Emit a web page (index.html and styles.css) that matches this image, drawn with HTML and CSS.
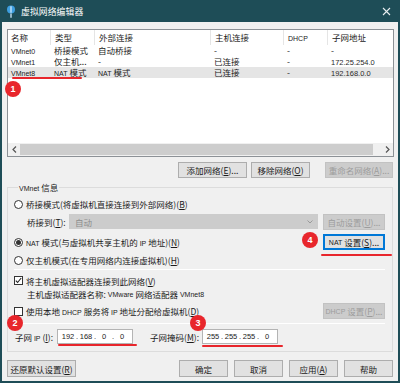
FILE: index.html
```html
<!DOCTYPE html>
<html lang="zh-CN">
<head>
    <meta charset="UTF-8">
    <meta name="viewport" content="width=device-width, initial-scale=1.0">
    <title>虚拟网络编辑器</title>
    <link rel="stylesheet" href="styles.css">
</head>
<body>
    <div class="window">
        <!-- Title bar -->
        <div class="titlebar">
            <svg class="app-icon" width="10" height="13" viewBox="0 0 10 13">
                <circle cx="5" cy="4.5" r="4" fill="#3e9fe0"/>
                <path d="M5 1.2v6.6M5 8.5v4.2" stroke="#cfeaff" stroke-width="1.3"/>
            </svg>
            <span class="title">虚拟网络编辑器</span>
            <svg class="close" width="9" height="9" viewBox="0 0 9 9">
                <path d="M1 1l7 7M8 1l-7 7" stroke="#e8eef0" stroke-width="1.1"/>
            </svg>
        </div>

        <div class="client">
            <!-- Network list -->
            <div class="list">
                <div class="list-row list-head">
                    <div class="cell">名称</div>
                    <div class="cell">类型</div>
                    <div class="cell">外部连接</div>
                    <div class="cell">主机连接</div>
                    <div class="cell"><span class="en">DHCP</span></div>
                    <div class="cell">子网地址</div>
                </div>
                <div class="list-row">
                    <div class="cell"><span class="en">VMnet0</span></div>
                    <div class="cell">桥接模式</div>
                    <div class="cell">自动桥接</div>
                    <div class="cell">-</div>
                    <div class="cell">-</div>
                    <div class="cell">-</div>
                </div>
                <div class="list-row">
                    <div class="cell"><span class="en">VMnet1</span></div>
                    <div class="cell">仅主机...</div>
                    <div class="cell">-</div>
                    <div class="cell">已连接</div>
                    <div class="cell">-</div>
                    <div class="cell"><span class="en ip">172.25.254.0</span></div>
                </div>
                <div class="list-row selected">
                    <div class="cell"><span class="en">VMnet8</span></div>
                    <div class="cell"><span class="en">NAT</span> 模式</div>
                    <div class="cell"><span class="en">NAT</span> 模式</div>
                    <div class="cell">已连接</div>
                    <div class="cell">-</div>
                    <div class="cell"><span class="en ip">192.168.0.0</span></div>
                </div>
                <div class="list-fill"></div>
                <div class="hscroll">
                    <span class="arrow">
                        <svg width="5" height="7" viewBox="0 0 5 7"><path d="M4 0.5L1 3.5l3 3" fill="none" stroke="#555" stroke-width="1.2"/></svg>
                    </span>
                    <div class="thumb"></div>
                    <span class="arrow">
                        <svg width="5" height="7" viewBox="0 0 5 7"><path d="M1 0.5l3 3-3 3" fill="none" stroke="#555" stroke-width="1.2"/></svg>
                    </span>
                </div>
            </div>

            <div class="net-actions">
                <button class="btn btn-add">添加网络(<u>E</u>)...</button>
                <button class="btn btn-remove">移除网络(<u>O</u>)</button>
                <button class="btn btn-rename" disabled>重命名网络(<u>A</u>)...</button>
            </div>

            <!-- VMnet info group -->
            <div class="group">
                <div class="group-title"><span class="en">VMnet</span> 信息</div>

                <div class="opt opt-bridge">
                    <span class="radio"></span>
                    <span>桥接模式(将虚拟机直接连接到外部网络)(<u>B</u>)</span>
                </div>
                <div class="opt bridge-to">
                    <span class="bridge-label">桥接到(<u>T</u>):</span>
                    <div class="select">
                        <span>自动</span>
                        <svg width="6" height="4" viewBox="0 0 6 4"><path d="M0.5 0.5L3 3l2.5-2.5" fill="none" stroke="#9a9a9a"/></svg>
                    </div>
                    <button class="btn btn-side" disabled>自动设置(<u>U</u>)...</button>
                </div>
                <div class="opt opt-nat">
                    <span class="radio checked"></span>
                    <span><span class="en">NAT</span> 模式(与虚拟机共享主机的 <span class="en">IP</span> 地址)(<u>N</u>)</span>
                    <button class="btn btn-side btn-focus"><span class="en">NAT</span>&nbsp;设置(<u>S</u>)...</button>
                </div>
                <div class="opt opt-host">
                    <span class="radio"></span>
                    <span>仅主机模式(在专用网络内连接虚拟机)(<u>H</u>)</span>
                </div>

                <div class="sep sep-top"></div>

                <div class="opt opt-check1">
                    <span class="check checked">
                        <svg width="7" height="7" viewBox="0 0 7 7"><path d="M0.8 3.6l1.8 1.9L6.2 1" fill="none" stroke="#222" stroke-width="1.1"/></svg>
                    </span>
                    <span>将主机虚拟适配器连接到此网络(<u>V</u>)</span>
                </div>
                <div class="opt adapter-name">
                    主机虚拟适配器名称: <span class="en">&nbsp;VMware&nbsp;</span> 网络适配器 <span class="en">&nbsp;VMnet8</span>
                </div>
                <div class="opt opt-check2">
                    <span class="check"></span>
                    <span>使用本地 <span class="en">DHCP</span> 服务将 <span class="en">IP</span> 地址分配给虚拟机(<u>D</u>)</span>
                    <button class="btn btn-side" disabled><span class="en">DHCP</span>&nbsp;设置(<u>P</u>)...</button>
                </div>

                <div class="sep sep-bottom"></div>

                <div class="opt addr-row">
                    <span class="addr-label">子网 <span class="en">IP</span> (<u>I</u>):</span>
                    <div class="ip-box">
                        <span class="oct">192</span><span class="dot">.</span><span class="oct">168</span><span class="dot">.</span><span class="oct">0</span><span class="dot">.</span><span class="oct">0</span>
                    </div>
                    <span class="addr-label mask-label">子网掩码(<u>M</u>):</span>
                    <div class="ip-box">
                        <span class="oct">255</span><span class="dot">.</span><span class="oct">255</span><span class="dot">.</span><span class="oct">255</span><span class="dot">.</span><span class="oct">0</span>
                    </div>
                </div>
            </div>

            <div class="footer">
                <button class="btn btn-reset">还原默认设置(<u>R</u>)</button>
                <div class="footer-right">
                    <button class="btn btn-foot">确定</button>
                    <button class="btn btn-foot">取消</button>
                    <button class="btn btn-foot">应用(<u>A</u>)</button>
                    <button class="btn btn-foot">帮助</button>
                </div>
            </div>
        </div>

        <!-- Annotations -->
        <span class="mark mark-1"></span>
        <span class="mark mark-2"></span>
        <span class="mark mark-3"></span>
        <span class="mark mark-4"></span>
        <span class="badge badge-1">1</span>
        <span class="badge badge-2">2</span>
        <span class="badge badge-3">3</span>
        <span class="badge badge-4">4</span>
    </div>
</body>
</html>
```

FILE: styles.css
```css
* {
    box-sizing: border-box;
}
body {
    margin: 0;
    font-family: "Noto Sans CJK SC", sans-serif;
    font-size: 8.5px;
    color: #1b1b1b;
    background: #f0f0f0;
}
.en {
    font-family: "Liberation Sans", Arial, sans-serif;
    font-size: 7px;
}
.ip {
    font-size: 7.5px;
    color: #2a2a2a;
}
u {
    text-underline-offset: 1px;
}
.window {
    position: relative;
    width: 400px;
    height: 383px;
    display: flex;
    flex-direction: column;
}
.titlebar {
    height: 22px;
    background: #1e4d57;
    display: flex;
    align-items: center;
    padding: 0 9px 0 6px;
    color: #fff;
}
.app-icon {
    margin-top: 1px;
}
.title {
    margin-left: 5px;
    font-size: 8.8px;
    letter-spacing: 0.1px;
}
.close {
    margin-left: auto;
}
.client {
    flex: 1;
    display: flex;
    flex-direction: column;
    border: 2px solid #1e4d57;
    border-top: 0;
    padding: 7px 4px 0 5px;
}

/* list view */
.list {
    height: 128px;
    background: #fff;
    border: 1px solid #8c9196;
    display: flex;
    flex-direction: column;
}
.list-row {
    display: grid;
    grid-template-columns: 42px 44px 116px 73px 44px 1fr;
    height: 11px;
    line-height: 11px;
    white-space: nowrap;
}
.list-row .cell {
    padding-left: 4px;
    overflow: hidden;
}
.list-row .cell:first-child {
    padding-left: 3px;
}
.list-head {
    height: 15px;
    line-height: 15px;
    color: #222;
}
.list-head .cell + .cell {
    border-left: 1px solid #e5e5e5;
}
.list-head .cell {
    padding-left: 4px;
}
.selected {
    background: #e5e5e5;
}
.list-fill {
    flex: 1;
}
.hscroll {
    height: 13px;
    display: flex;
    align-items: center;
    background: #f0f0f0;
}
.arrow {
    width: 12px;
    display: flex;
    justify-content: center;
}
.thumb {
    flex: 1;
    height: 11px;
    background: #cdcdcd;
    margin-right: 8px;
}

/* buttons */
.btn {
    font-family: inherit;
    font-size: 8.5px;
    color: #1b1b1b;
    height: 16px;
    padding: 0;
    border: 1px solid #adadad;
    background: #e1e1e1;
    display: flex;
    align-items: center;
    justify-content: center;
    white-space: nowrap;
}
.btn:disabled {
    background: #cccccc;
    border-color: #c2c2c2;
    color: #9c9c9c;
}
.btn-focus {
    border-color: #0078d7;
    box-shadow: inset 0 0 0 1px #0078d7;
}
.net-actions {
    display: flex;
    justify-content: flex-end;
    margin-top: 5px;
    padding-right: 1px;
}
.btn-add {
    width: 69px;
}
.btn-remove {
    width: 59px;
    margin-left: 4px;
}
.btn-rename {
    width: 68px;
    margin-left: 15px;
}

/* group box */
.group {
    margin: 9px 1px 0 0;
    border: 1px solid #dcdcdc;
    padding: 0 7px 2px 6px;
}
.group-title {
    margin: -7px 0 0 4px;
    width: fit-content;
    padding: 0 1px;
    line-height: 12px;
    background: #f0f0f0;
}
.opt {
    display: flex;
    align-items: center;
    white-space: nowrap;
}
.opt-bridge {
    height: 18px;
}
.bridge-to {
    height: 17px;
    padding-left: 13px;
}
.opt-nat {
    height: 24px;
}
.opt-host {
    height: 12px;
}
.opt-check1 {
    height: 17px;
}
.adapter-name {
    height: 10px;
    padding-left: 13px;
}
.opt-check2 {
    height: 24px;
}
.addr-row {
    height: 25px;
    padding-left: 1px;
}
.radio {
    width: 9px;
    height: 9px;
    border: 1px solid #333;
    border-radius: 50%;
    background: #fff;
    margin-right: 3px;
    flex: none;
    display: flex;
    align-items: center;
    justify-content: center;
}
.radio.checked::after {
    content: "";
    width: 5px;
    height: 5px;
    border-radius: 50%;
    background: #333;
}
.check {
    width: 9px;
    height: 9px;
    border: 1px solid #333;
    background: #fff;
    margin-right: 3px;
    flex: none;
    display: flex;
    align-items: center;
    justify-content: center;
}
.bridge-label {
    width: 42px;
}
.select {
    width: 249px;
    height: 15px;
    background: #cccccc;
    color: #8d8d8d;
    display: flex;
    align-items: center;
    justify-content: space-between;
    padding: 0 5px 0 6px;
}
.btn-side {
    width: 62px;
    margin-left: auto;
}
.sep {
    height: 1px;
    background: #d9d9d9;
    border-bottom: 1px solid #fff;
}
.sep-top {
    margin: 3px 0 2px;
}
.sep-bottom {
    margin: 0;
}
.addr-label {
    width: 42px;
}
.mask-label {
    width: 52px;
    margin-left: 17px;
}
.ip-box {
    width: 76px;
    height: 15px;
    background: #fff;
    border: 1px solid #b4b4b4;
    display: flex;
    align-items: center;
    padding-left: 3px;
    font-family: "Liberation Sans", Arial, sans-serif;
    font-size: 7.5px;
    color: #222;
}
.oct {
    width: 14px;
    text-align: center;
}
.dot {
    width: 4px;
    text-align: center;
}

/* footer */
.footer {
    display: flex;
    margin-top: 8px;
}
.btn-reset {
    width: 69px;
    height: 17px;
}
.footer-right {
    display: flex;
    gap: 6px;
    margin-left: auto;
    padding-right: 1px;
}
.btn-foot {
    width: 49px;
    height: 17px;
}

/* red annotations */
.badge {
    position: absolute;
    width: 16px;
    height: 16px;
    border-radius: 50%;
    background: #e8262c;
    color: #fff;
    font-family: "Liberation Sans", Arial, sans-serif;
    font-weight: bold;
    font-size: 9px;
    line-height: 16px;
    text-align: center;
}
.badge-1 { left: 5px; top: 81px; }
.badge-2 { left: 7px; top: 315px; }
.badge-3 { left: 190px; top: 315px; }
.badge-4 { left: 302px; top: 232px; }
.mark {
    position: absolute;
    height: 1.5px;
    background: #e8262c;
    border-radius: 1px;
}
.mark-1 { left: 12px; width: 70px; top: 77px; }
.mark-2 { left: 58px; width: 79px; top: 344px; }
.mark-3 { left: 202px; width: 81px; top: 345px; }
.mark-4 { left: 321px; width: 71px; top: 254px; }
```
